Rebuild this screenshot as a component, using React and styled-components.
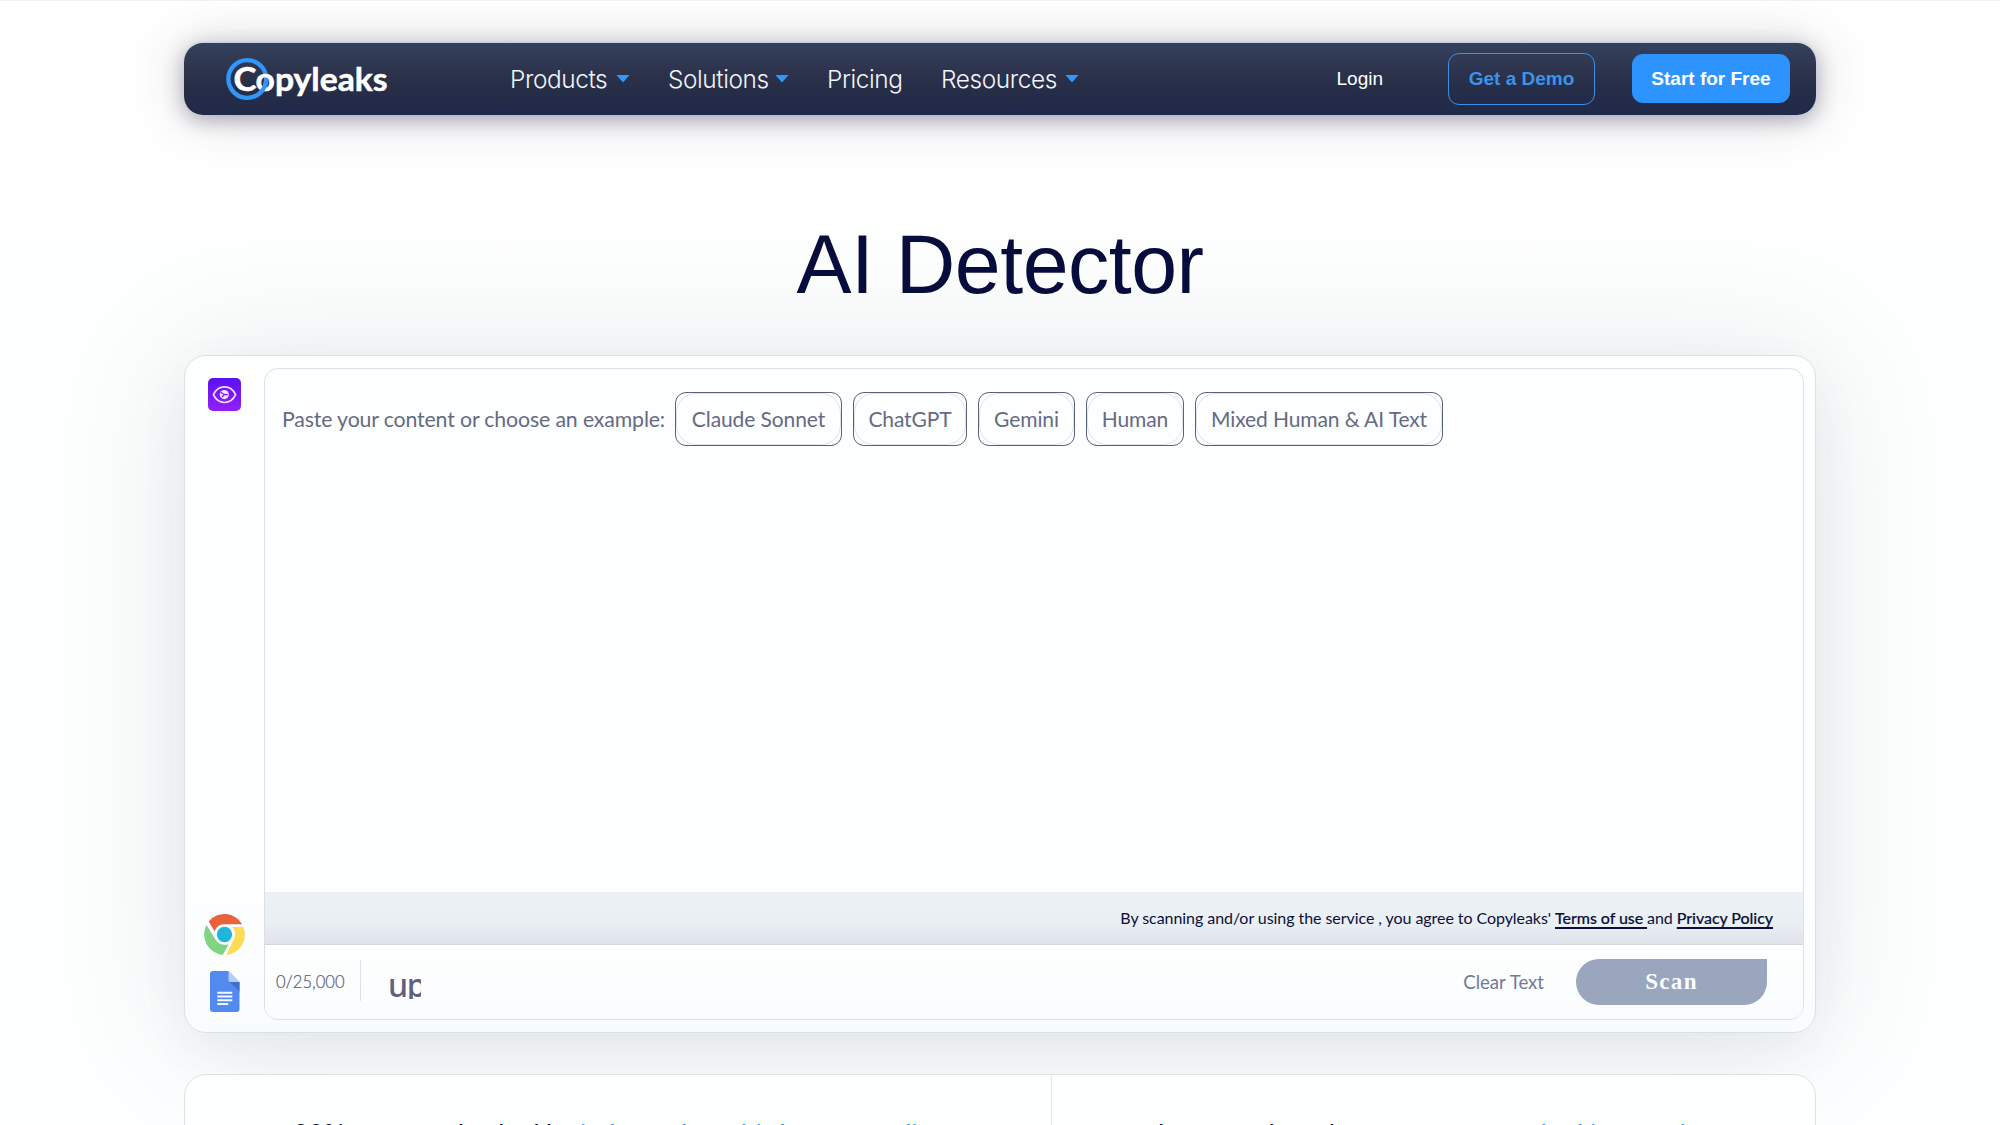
import React from 'react';
import styled, { createGlobalStyle } from 'styled-components';

const GlobalStyle = createGlobalStyle`
  *, *::before, *::after { box-sizing: border-box; }
  html, body { margin: 0; padding: 0; background: #fdfefe; }
  button { font: inherit; margin: 0; padding: 0; border: 0; background: none; }
  a { color: inherit; text-decoration: none; }
`;

const Page = styled.div`
  height: 1125px;
  overflow: hidden;
  display: flex;
  flex-direction: column;
  align-items: center;
  padding-top: 42px;
  border-top: 1px solid #f1f2f3;
  background: linear-gradient(#ffffff 0, #fefefe 40px, #fdfeff 100%);
  font-family: Lato, 'Noto Sans', sans-serif;
`;

const Nav = styled.nav`
  flex: none;
  width: 1632px;
  height: 72px;
  display: flex;
  align-items: center;
  padding: 0 26px 1px 41px;
  border-radius: 19px;
  background: linear-gradient(#34425e 0%, #2e344e 35%, #262d47 65%, #1f294b 100%);
  box-shadow: 0 -1px 1px #c3d0e2, 0 5px 20px rgba(45, 32, 70, 0.34), 0 0 50px rgba(50, 60, 70, 0.2);
`;

const Logo = styled.svg`
  flex: none;
  width: 170px;
  height: 48px;
  overflow: visible;
`;

const NavLinks = styled.div`
  display: flex;
  align-items: center;
  gap: 38px;
  margin-left: 115px;
`;

const NavLink = styled.a`
  display: flex;
  align-items: center;
  width: ${(p) => p.$width}px;
  justify-content: space-between;
  color: #f3f5fb;
  font: 300 24.4px/32px Inter, 'Liberation Sans', sans-serif;
  letter-spacing: -0.4px;
  white-space: nowrap;
`;

const Caret = styled.i`
  width: 14px;
  height: 8px;
  background: #3098fb;
  clip-path: polygon(0 0, 100% 0, 50% 100%);
`;

const NavActions = styled.div`
  display: flex;
  align-items: center;
  margin-left: auto;
  font: 19px/24px 'Liberation Sans', Arial, sans-serif;
`;

const Login = styled.a`
  color: #ffffff;
  margin-right: 65px;
`;

const NavButton = styled.button`
  display: flex;
  align-items: center;
  justify-content: center;
  width: ${(p) => (p.$filled ? 158 : 147)}px;
  height: ${(p) => (p.$filled ? 49 : 52)}px;
  margin-left: ${(p) => (p.$filled ? 37 : 0)}px;
  border: ${(p) => (p.$filled ? '0' : '1.5px solid #3a8fe6')};
  border-radius: 11px;
  background: ${(p) => (p.$filled ? '#2d93ff' : 'transparent')};
  color: ${(p) => (p.$filled ? '#ffffff' : '#3a94ee')};
  font-weight: 700;
`;

const Title = styled.h1`
  flex: none;
  margin: 102px 0 44px;
  color: #070d3d;
  font: 400 82.5px/94px 'Liberation Sans', Arial, sans-serif;
  letter-spacing: -0.5px;
`;

const Panel = styled.main`
  flex: none;
  width: 1632px;
  height: 678px;
  display: flex;
  padding: 12px 11px 12px 0;
  border: 1.5px solid #d9e1e3;
  border-radius: 22px;
  background: linear-gradient(#fdfefe 0%, #fdfeff 80%, #f9fcfd 100%);
  box-shadow: 0 6px 130px rgba(35, 85, 90, 0.13), 0 16px 50px rgba(50, 50, 90, 0.05);
`;

const Rail = styled.aside`
  width: 79px;
  display: flex;
  flex-direction: column;
  align-items: center;
  padding: 10px 0 8px;
`;

const RailIcon = styled.svg`
  display: block;
  overflow: visible;
  margin-top: ${(p) => p.$top || 0};
`;

const Editor = styled.section`
  flex: 1;
  display: flex;
  flex-direction: column;
  overflow: hidden;
  border: 1.5px solid #dbe0e5;
  border-radius: 14px;
  background: #fdfeff;
`;

const Prompt = styled.div`
  flex: 1;
  display: flex;
  align-items: flex-start;
  padding: 22.5px 0 0 17px;
  color: #656b82;
  font-size: 21px;
  line-height: 54px;
  white-space: nowrap;
`;

const PromptLabel = styled.span`
  width: 393px;
  font-size: 21.3px;
  letter-spacing: -0.15px;
`;

const Examples = styled.div`
  display: flex;
  gap: 11px;
`;

const Example = styled.button`
  position: relative;
  display: flex;
  align-items: center;
  justify-content: center;
  width: ${(p) => p.$width}px;
  height: 54px;
  border: 1.5px solid #59617a;
  border-radius: 11px;
  color: #656b82;
  letter-spacing: -0.1px;

  &::before {
    content: '';
    position: absolute;
    inset: 0;
    border: 1px solid #dce0ea;
    border-radius: 20px;
  }
`;

const Terms = styled.div`
  height: 53px;
  display: flex;
  align-items: center;
  justify-content: flex-end;
  padding: 0 30px 1px 0;
  background: linear-gradient(#ecf1f5 0%, #eaeff3 60%, #dfe3ea 100%);
  border-bottom: 1px solid #d3d8df;
  color: #0b0f3a;
  font-size: 16px;
  letter-spacing: -0.06px;
  white-space: pre;
`;

const TermsLink = styled.a`
  font-weight: 500;
  text-decoration: underline;
  text-decoration-thickness: 1.5px;
  text-underline-offset: 3px;
  -webkit-text-stroke: 0.15px #0b0f3a;
`;

const Footer = styled.footer`
  height: 74px;
  display: flex;
  align-items: flex-start;
  padding: 15px 36px 0 11px;
  background: linear-gradient(#feffff, #f9fcfe);
`;

const Counter = styled.span`
  width: 85px;
  height: 41px;
  padding-top: 1px;
  border-right: 1px solid #dde2ea;
  color: #5a6079;
  font-weight: 300;
  font-size: 16.6px;
  line-height: 42px;
  -webkit-text-stroke: 0.2px #5a6079;
`;

const UploadLabel = styled.span`
  width: 33px;
  height: 28px;
  margin: 11px 0 0 27px;
  overflow: hidden;
  color: #60617f;
  font: 500 32px/28px 'Noto Sans', sans-serif;
  letter-spacing: -1.4px;
`;

const ClearText = styled.button`
  margin-left: auto;
  margin-right: 32px;
  color: #747a93;
  font-size: 18.6px;
  line-height: 44px;
`;

const ScanButton = styled.button`
  width: 191px;
  height: 46px;
  margin-top: -1px;
  border-radius: 23px 0 23px 23px;
  background: #99a6bd;
  color: #fbfcff;
  font: 700 23px/46px 'Liberation Serif', 'Times New Roman', serif;
  letter-spacing: 1.3px;
`;

const Claims = styled.section`
  flex: none;
  width: 1632px;
  height: 120px;
  display: flex;
  margin-top: 41px;
  border: 1.5px solid #dbe0e3;
  border-radius: 22px;
  background: #fdfefe;
`;

const Claim = styled.p`
  width: ${(p) => p.$width}px;
  margin: 0;
  padding-top: 44px;
  border-right: ${(p) => (p.$divided ? '1px solid #e3eaee' : '0')};
  color: #070d3d;
  font-size: 26.2px;
  line-height: 30px;
  text-align: center;
  white-space: nowrap;
`;

const ClaimLink = styled.a`
  color: #2b86ea;
`;

const CopyleaksLogo = () => (
  <Logo viewBox="0 0 170 48" role="img" aria-label="Copyleaks">
    <circle cx="22.3" cy="24" r="18.9" fill="none" stroke="#3196f7" strokeWidth="4.4" />
    <text x="8.6" y="35.6" fill="#ffffff" stroke="#ffffff" strokeWidth="0.5" fontFamily="Lato" fontWeight="700" fontSize="32.5">
      <tspan textLength="23" lengthAdjust="spacingAndGlyphs">C</tspan>
      <tspan x="30.6" textLength="132" lengthAdjust="spacingAndGlyphs">opyleaks</tspan>
    </text>
    <path d="M41.2 24.5 A18.9 18.9 0 0 1 35.8 37.2" fill="none" stroke="#3196f7" strokeWidth="4.2" />
  </Logo>
);

const EyeIcon = () => (
  <RailIcon width="33" height="33" viewBox="0 0 33 33">
    <defs>
      <linearGradient id="violet" x1="0" y1="0" x2="0" y2="1">
        <stop offset="0" stopColor="#5a10f5" />
        <stop offset="1" stopColor="#9420f8" />
      </linearGradient>
    </defs>
    <rect width="33" height="33" rx="5" fill="url(#violet)" />
    <path d="M5.4 16.7 C10.3 6.3 22.7 6.3 27.6 16.7 C22.7 27.1 10.3 27.1 5.4 16.7 Z" fill="none" stroke="#f6e2ff" strokeWidth="1.7" strokeLinejoin="round" />
    <circle cx="16.3" cy="16.6" r="4.6" fill="#f6e2ff" />
    <path d="M12.6 14.2 L16.4 16.6 L14 19 M16.4 16.6 H19.8" fill="none" stroke="#7818f5" strokeWidth="1.2" />
  </RailIcon>
);

const ChromeIcon = () => (
  <RailIcon $top="auto" width="41" height="41" viewBox="-20.5 -20.5 41 41">
    <path d="M-15.8 -13.1 A20.5 20.5 0 0 1 17.7 -10.3 H0 A10.3 10.3 0 0 0 -9.4 -4.4 L-9.8 -3 Z" fill="#e8623a" />
    <path d="M-18 -9.6 A20.5 20.5 0 0 0 -1.8 20.4 L3.6 11 L3.3 9.8 A10.3 10.3 0 0 1 -9.3 4.5 Z" fill="#80d484" />
    <path d="M19 -7.6 A20.5 20.5 0 0 1 1.6 20.4 L9.2 5 A10.3 10.3 0 0 0 7.3 -7.6 Z" fill="#fcdc54" />
    <circle r="7.7" fill="#1fb6de" />
  </RailIcon>
);

const DocsIcon = () => (
  <RailIcon $top="16px" width="30" height="41" viewBox="0 0 30 41">
    <path d="M3 0 H18.5 L29.5 11 V38 A3 3 0 0 1 26.5 41 H3 A3 3 0 0 1 0 38 V3 A3 3 0 0 1 3 0 Z" fill="#528af0" />
    <path d="M19.5 11 H29.5 V20.5 Z" fill="#3f70d0" />
    <path d="M18.5 0 L29.5 11 H20.5 A2 2 0 0 1 18.5 9 Z" fill="#b4cdfb" />
    <path d="M7.3 21.8 H22.3 M7.3 25.5 H22.3 M7.3 29.2 H22.3 M7.3 33 H18.2" stroke="#f6f9ff" strokeWidth="2" />
  </RailIcon>
);

const links = [
  { label: 'Products', width: 120, menu: true },
  { label: 'Solutions', width: 121, menu: true },
  { label: 'Pricing', width: 76 },
  { label: 'Resources', width: 138, menu: true },
];

const examples = [
  { label: 'Claude Sonnet', width: 167 },
  { label: 'ChatGPT', width: 114 },
  { label: 'Gemini', width: 97 },
  { label: 'Human', width: 98 },
  { label: 'Mixed Human & AI Text', width: 248 },
];

export default function App() {
  return (
    <>
      <GlobalStyle />
      <Page>
        <Nav>
          <CopyleaksLogo />
          <NavLinks>
            {links.map((l) => (
              <NavLink key={l.label} $width={l.width}>
                {l.label}
                {l.menu && <Caret />}
              </NavLink>
            ))}
          </NavLinks>
          <NavActions>
            <Login>Login</Login>
            <NavButton>Get a Demo</NavButton>
            <NavButton $filled>Start for Free</NavButton>
          </NavActions>
        </Nav>
        <Title>AI Detector</Title>
        <Panel>
          <Rail>
            <EyeIcon />
            <ChromeIcon />
            <DocsIcon />
          </Rail>
          <Editor>
            <Prompt>
              <PromptLabel>Paste your content or choose an example:</PromptLabel>
              <Examples>
                {examples.map((e) => (
                  <Example key={e.label} $width={e.width}>{e.label}</Example>
                ))}
              </Examples>
            </Prompt>
            <Terms>
              {"By scanning and/or using the service , you agree to Copyleaks' "}
              <TermsLink>{'Terms of use '}</TermsLink>
              {'and '}
              <TermsLink>Privacy Policy</TermsLink>
            </Terms>
            <Footer>
              <Counter>0/25,000</Counter>
              <UploadLabel>up</UploadLabel>
              <ClearText>Clear Text</ClearText>
              <ScanButton>Scan</ScanButton>
            </Footer>
          </Editor>
        </Panel>
        <Claims>
          <Claim $width={867} $divided>
            99% accuracy backed by <ClaimLink>independent third-party studies</ClaimLink>
          </Claim>
          <Claim $width={762}>
            Lets your brand <ClaimLink>enter a new standard in security</ClaimLink>
          </Claim>
        </Claims>
      </Page>
    </>
  );
}
